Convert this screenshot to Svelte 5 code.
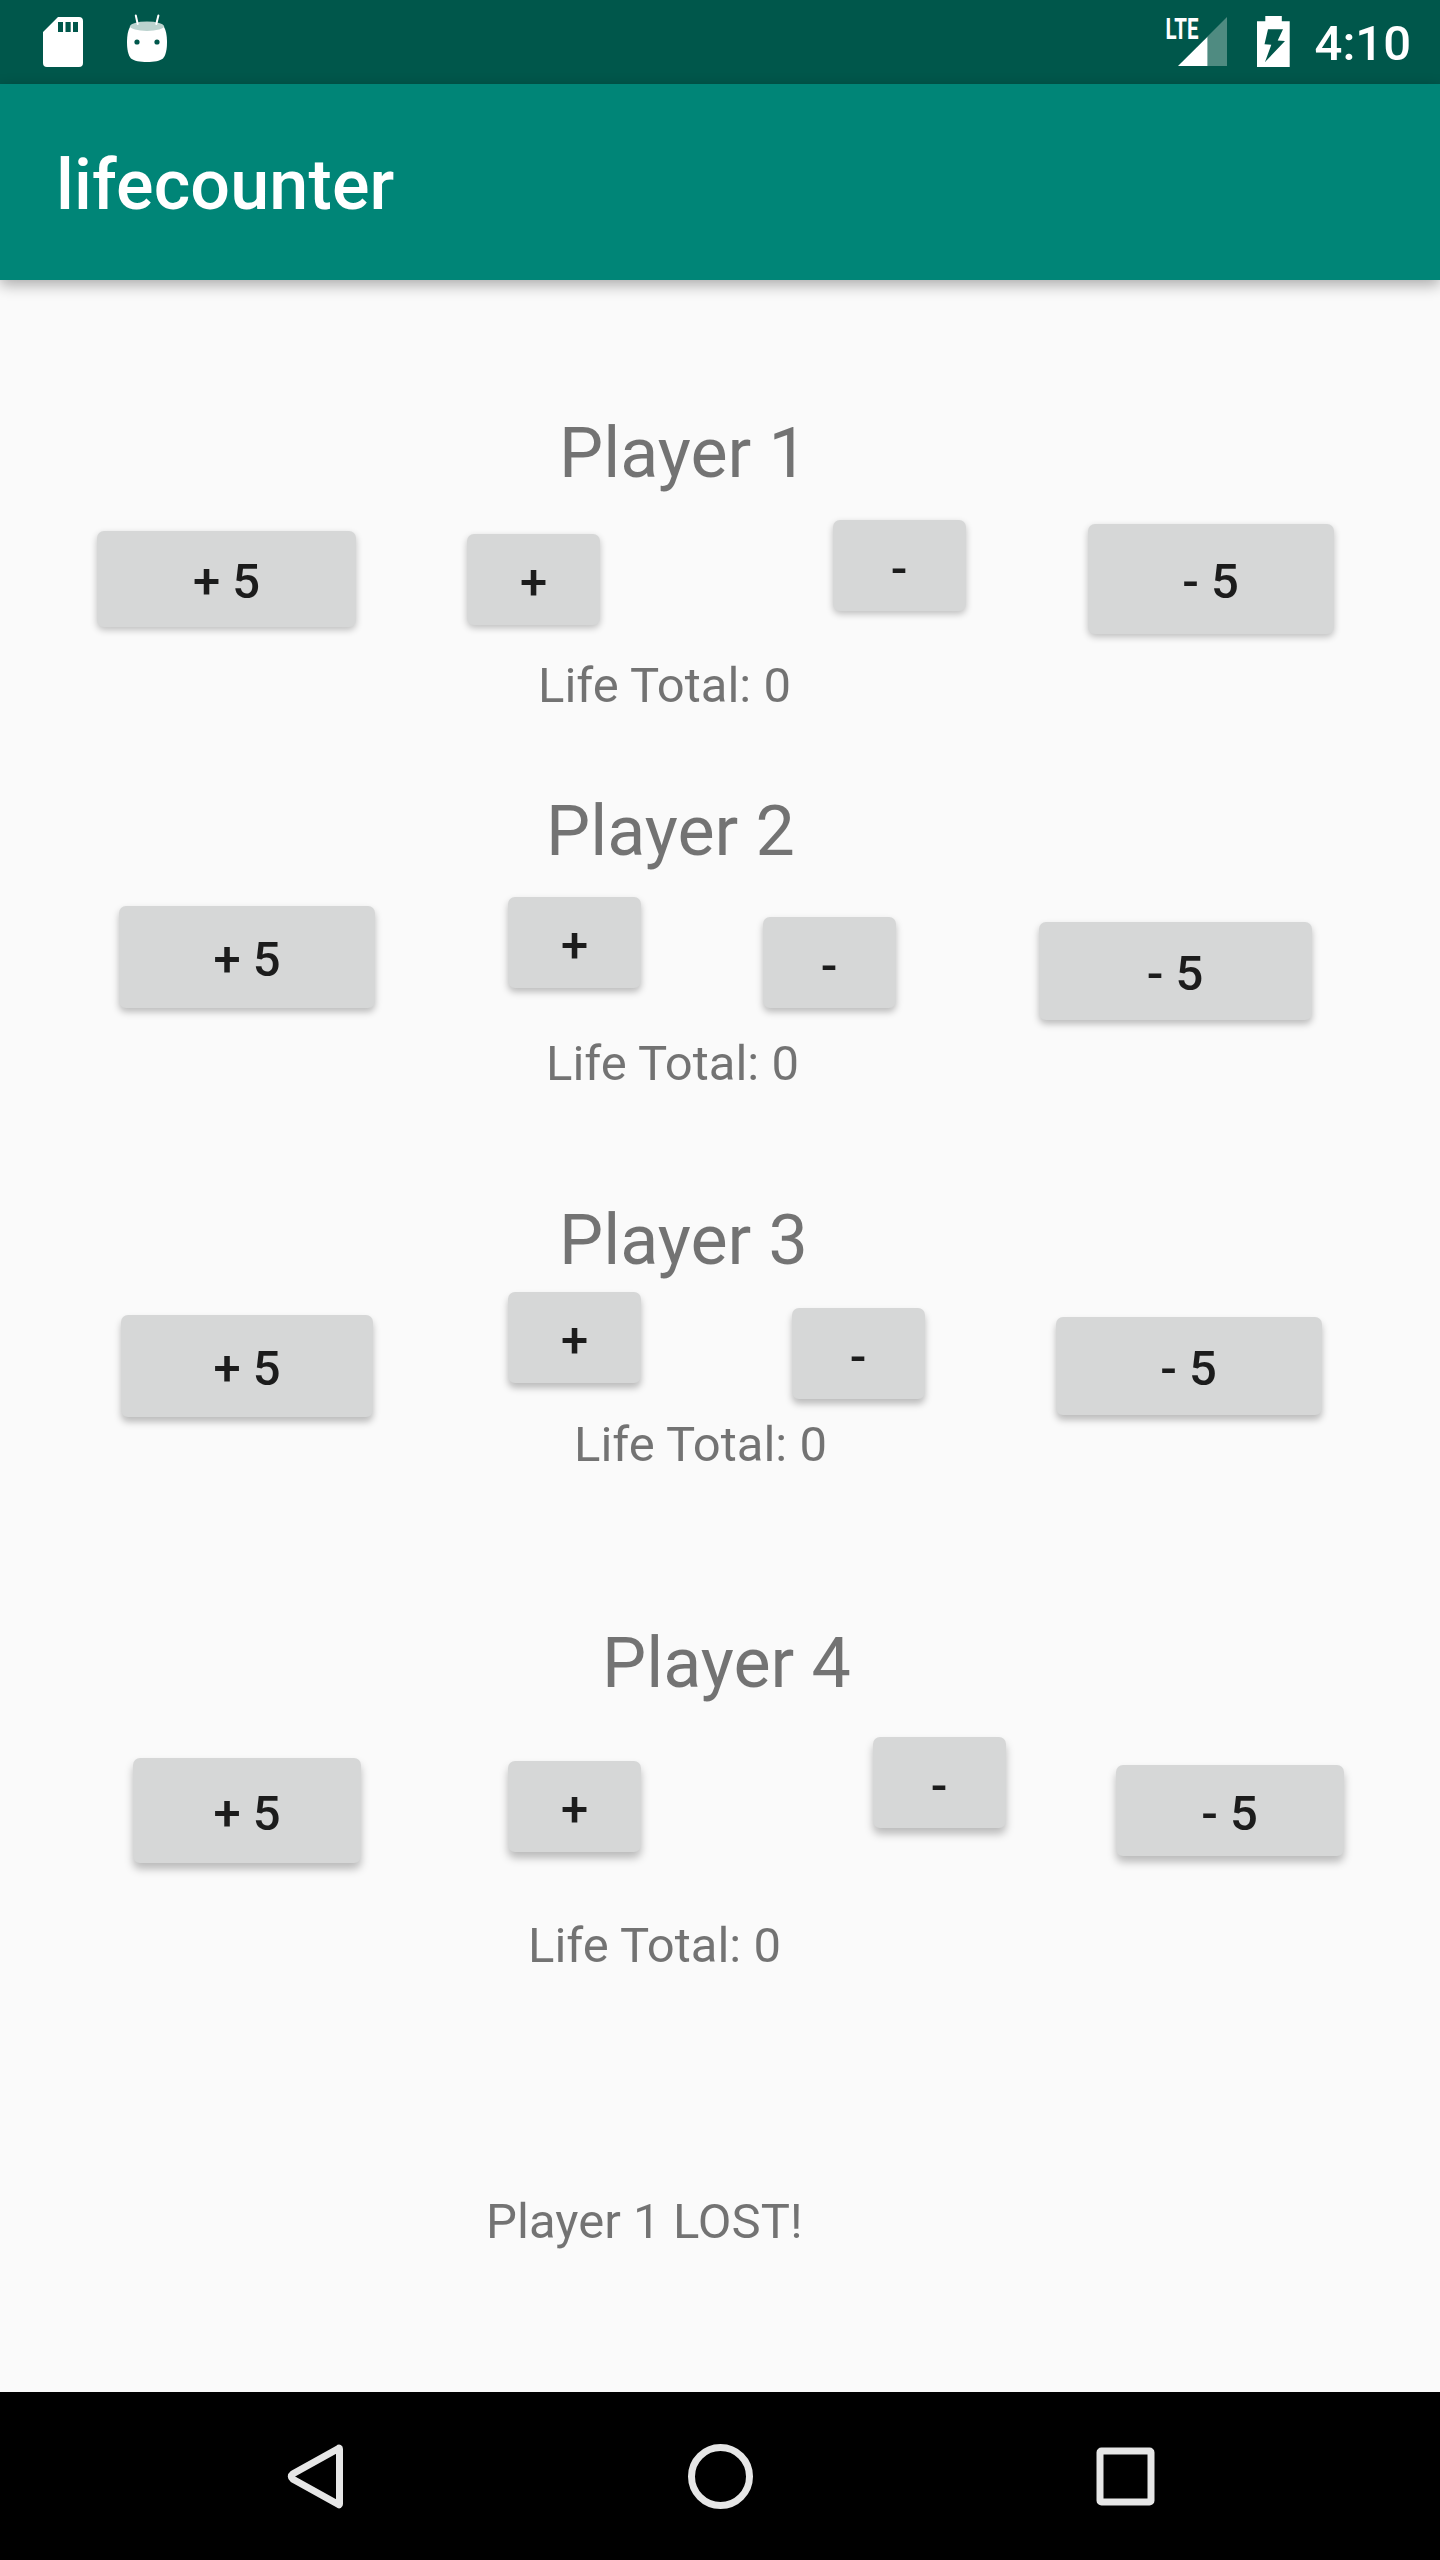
<script>
  const labels = ['+ 5', '+', '-', '- 5'];
  let life = $state([0, 0, 0, 0]);
  const steps = [5, 1, -1, -5];
</script>

<div class="screen">
  <header class="status">
    <svg class="notifications" width="128" height="84" viewBox="43 0 128 84">
      <path fill="#fff" fill-rule="evenodd" d="M58 17H79a4 4 0 0 1 4 4V63a4 4 0 0 1-4 4H47a4 4 0 0 1-4-4V32ZM58 22V32H63V22ZM65.5 22V32H70.7V22ZM73 22V32H78V22Z" />
      <path fill="#fff" d="M131 25.5C128 29 127 36 127 42C127 49 128 55 131 58.5C134 61 140 62 147 62C154 62 160 61 163 58.5C166 55 167 49 167 42C167 36 166 29 163 25.5Z" />
      <ellipse cx="147" cy="26.3" rx="17" ry="4.7" fill="#bcd3cf" />
      <path stroke="#fff" stroke-width="2" stroke-linecap="round" d="M135.8 15.5L137.7 24M158.4 15.5L156.3 24" />
      <circle cx="137" cy="42" r="2.6" fill="#00574b" />
      <circle cx="157" cy="42" r="2.6" fill="#00574b" />
    </svg>
    <svg class="system" width="132" height="84" viewBox="1160 0 132 84">
      <text class="lte" x="1165.5" y="39" textLength="33" lengthAdjust="spacingAndGlyphs">LTE</text>
      <path fill="#4f8b81" d="M1207.5 36.5L1227 17V66H1207.5Z" />
      <path fill="#fff" d="M1178 66L1207.5 36.7V66Z" />
      <path fill="#fff" fill-rule="evenodd" d="M1265.3 16H1281.8V21.3H1289.7V67H1257V21.3H1265.3ZM1268 29.3L1264.5 44.3L1271.3 44.7L1265 62L1285 41L1277.7 40.5L1283 29.3Z" />
    </svg>
    <span class="time">4:10</span>
  </header>

  <div class="appbar"><h1>lifecounter</h1></div>

  <main>
    {#each life as total, i}
      <section class="player p{i + 1}">
        <h2>Player {i + 1}</h2>
        <div class="controls">
          {#each labels as label, k}
            <button onclick={() => (life[i] += steps[k])}>{label}</button>
          {/each}
        </div>
        <p>Life Total: {total}</p>
      </section>
    {/each}
    <p class="result">Player 1 LOST!</p>
  </main>

  <nav>
    <svg width="100" height="100" viewBox="-50.5 -50.5 100 100">
      <path d="M24 -27.5V27.5Q24 29 23 28L-22.5 2.8Q-26 0 -22.5 -2.8L23 -28Q24 -29 24 -27.5Z" />
    </svg>
    <svg width="100" height="100" viewBox="-50.5 -50.5 100 100">
      <circle r="29" />
    </svg>
    <svg width="100" height="100" viewBox="-50.5 -50.5 100 100">
      <rect x="-25.5" y="-25.5" width="51" height="51" rx="1.5" />
    </svg>
  </nav>
</div>

<style>
  :global(body) {
    margin: 0;
    background: #fafafa;
  }
  .screen {
    display: flex;
    flex-direction: column;
    width: 1440px;
    height: 2560px;
    overflow: hidden;
    background: #fafafa;
    font-family: Roboto, sans-serif;
  }
  .status {
    display: flex;
    flex: none;
    box-sizing: border-box;
    height: 84px;
    padding: 0 28px 0 43px;
    background: #00574b;
    color: #fff;
  }
  .system {
    margin-left: auto;
  }
  .lte {
    font-size: 29px;
    font-weight: 700;
    fill: #fff;
  }
  .time {
    width: 97px;
    margin-right: 1px;
    margin-left: 22px;
    padding-top: 15px;
    font-size: 49px;
    font-weight: 500;
    line-height: 57px;
    text-align: right;
    white-space: nowrap;
  }
  .appbar {
    display: flex;
    flex: none;
    z-index: 1;
    height: 196px;
    padding: 0 56px;
    align-items: center;
    background: #008577;
    box-shadow: 0 5px 14px rgba(0, 0, 0, 0.32);
  }
  h1 {
    margin: 6px 0 0;
    color: #fff;
    font-size: 70px;
    font-weight: 500;
    letter-spacing: 0.15px;
    line-height: 82px;
  }
  main {
    flex: 1;
    min-height: 0;
    padding-top: 132px;
    color: rgba(0, 0, 0, 0.54);
  }
  h2 {
    margin: 0;
    font-size: 70px;
    font-weight: 400;
    line-height: 82px;
  }
  p {
    margin: 0;
    font-size: 49px;
    line-height: 57px;
  }
  .controls {
    display: flex;
    align-items: flex-start;
  }
  button {
    flex: none;
    box-sizing: border-box;
    width: 133px;
    height: 91px;
    margin: 0;
    padding: 5px 0 0;
    border: 0;
    border-radius: 7px;
    background: #d6d7d7;
    color: rgba(0, 0, 0, 0.87);
    font: 500 49px/57px Roboto, sans-serif;
  }
  button:nth-child(n + 3) {
    padding-right: 1px;
  }

  .p1 h2 { margin-left: 559px; }
  .p1 .controls { height: 114px; margin-top: 26px; }
  .p1 p { margin: 23px 0 0 538px; }
  .p1 button { box-shadow: 0 3px 7px rgba(0, 0, 0, 0.24); }
  .p1 button:nth-child(1) { width: 259px; height: 96px; margin: 11px 0 0 97px; }
  .p1 button:nth-child(2) { margin: 14px 0 0 111px; }
  .p1 button:nth-child(3) { margin-left: 233px; }
  .p1 button:nth-child(4) { width: 246px; height: 110px; margin: 4px 0 0 122px; padding-top: 4px; }

  .p2 { margin-top: 76px; }
  .p2 h2 { margin-left: 546px; }
  .p2 .controls { height: 123px; margin-top: 25px; }
  .p2 p { margin: 15px 0 0 546px; }
  .p2 button { box-shadow: 0 4px 7px rgba(0, 0, 0, 0.25); }
  .p2 button:nth-child(1) { width: 256px; height: 102px; margin: 9px 0 0 119px; }
  .p2 button:nth-child(2) { margin-left: 133px; }
  .p2 button:nth-child(3) { margin: 20px 0 0 122px; }
  .p2 button:nth-child(4) { width: 273px; height: 98px; margin: 25px 0 0 143px; }

  .p3 { margin-top: 107px; }
  .p3 h2 { margin-left: 559px; }
  .p3 .controls { height: 124px; margin-top: 11px; }
  .p3 p { margin-left: 574px; }
  .p3 button { box-shadow: 0 5px 7px rgba(0, 0, 0, 0.25); }
  .p3 button:nth-child(1) { width: 252px; height: 102px; margin: 23px 0 0 121px; }
  .p3 button:nth-child(2) { margin-left: 135px; }
  .p3 button:nth-child(3) { margin: 16px 0 0 151px; }
  .p3 button:nth-child(4) { width: 266px; height: 98px; margin: 25px 0 0 131px; }

  .p4 { margin-top: 149px; }
  .p4 h2 { margin-left: 602px; }
  .p4 .controls { height: 126px; margin-top: 33px; }
  .p4 p { margin: 54px 0 0 528px; }
  .p4 button { box-shadow: 0 6px 8px rgba(0, 0, 0, 0.26); }
  .p4 button:nth-child(1) { width: 228px; height: 105px; margin: 21px 0 0 133px; }
  .p4 button:nth-child(2) { margin: 24px 0 0 147px; }
  .p4 button:nth-child(3) { margin-left: 232px; }
  .p4 button:nth-child(4) { width: 228px; margin: 28px 0 0 110px; }

  .result {
    margin: 219px 0 0 486px;
    letter-spacing: 0.05px;
  }
  nav {
    display: grid;
    flex: none;
    grid-template-columns: repeat(3, 405px);
    place-content: center;
    place-items: center;
    height: 168px;
    background: #000;
  }
  nav svg {
    fill: none;
    stroke: #e6e6e6;
    stroke-width: 7;
    stroke-linejoin: round;
  }
</style>
